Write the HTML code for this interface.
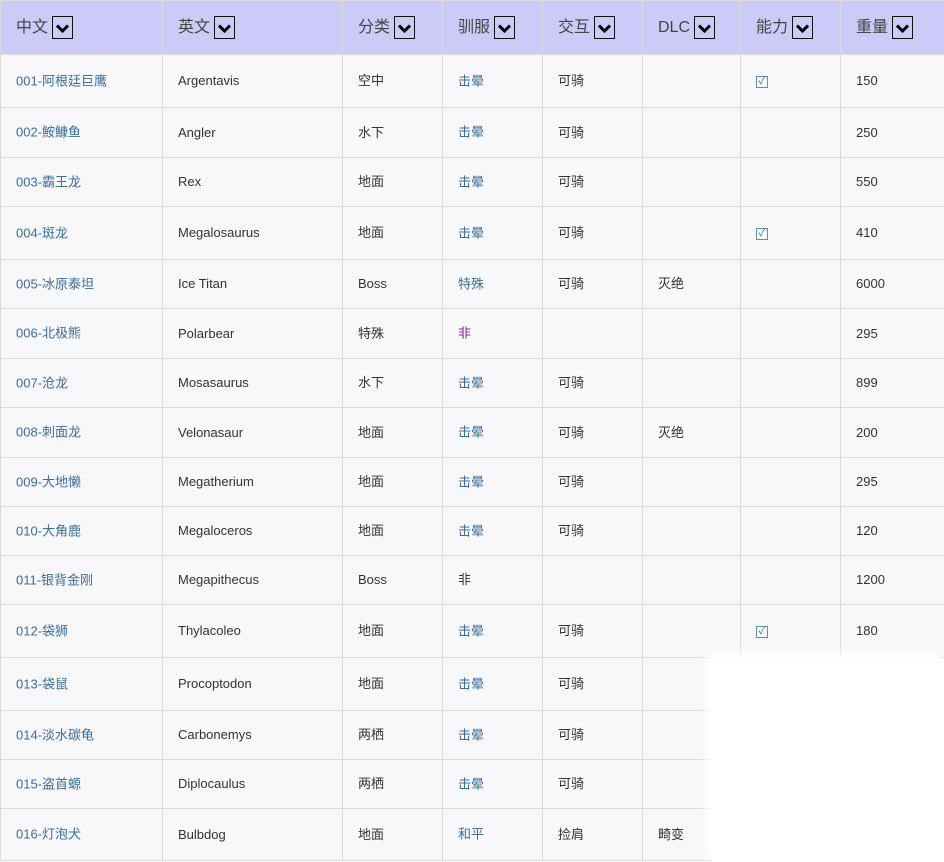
<!DOCTYPE html>
<html><head><meta charset="utf-8"><style>
body{margin:0;width:944px;height:862px;overflow:hidden;background:#fff;font-family:"Liberation Sans","Noto Sans CJK SC",sans-serif;}
table{border-collapse:collapse;table-layout:fixed;width:944px;position:absolute;left:0;top:0;}
td,th{border:1px solid #dcdadf;background:#f8f7f9;padding:0 0 0 15px;font-size:13px;line-height:20px;color:#333;text-align:left;font-weight:normal;white-space:nowrap;overflow:hidden;vertical-align:middle;}
td>*{vertical-align:middle}
th{background:#cccbf8;font-size:16px;line-height:24px;color:#444;height:53px;}
.dd{display:inline-block;width:19px;height:21px;border:1px solid #111;vertical-align:middle;margin-left:4px;position:relative;top:0px;}
.dd svg{position:absolute;left:3px;top:7px}
a{color:#3a6e9c;text-decoration:none}
.v{color:#7a2a8a}
.ck{display:inline-block;width:10px;height:10px;border:1px solid #5b8fb5;font-size:10px;line-height:10px;color:#3a6e9c;text-align:center}
.cover{position:absolute;left:712px;top:659px;width:232px;height:203px;background:#fff;box-shadow:-4px -4px 8px 2px #fff}
</style></head><body>
<table>
<colgroup><col style="width:162px"><col style="width:180px"><col style="width:100px"><col style="width:100px"><col style="width:100px"><col style="width:98px"><col style="width:100px"><col style="width:104px"></colgroup>
<tr>
<th>中文<span class="dd"><svg width="13" height="9"><path d="M1 1.5L6.5 7L12 1.5" stroke="#000" stroke-width="3" fill="none"/></svg></span></th>
<th>英文<span class="dd"><svg width="13" height="9"><path d="M1 1.5L6.5 7L12 1.5" stroke="#000" stroke-width="3" fill="none"/></svg></span></th>
<th>分类<span class="dd"><svg width="13" height="9"><path d="M1 1.5L6.5 7L12 1.5" stroke="#000" stroke-width="3" fill="none"/></svg></span></th>
<th>驯服<span class="dd"><svg width="13" height="9"><path d="M1 1.5L6.5 7L12 1.5" stroke="#000" stroke-width="3" fill="none"/></svg></span></th>
<th>交互<span class="dd"><svg width="13" height="9"><path d="M1 1.5L6.5 7L12 1.5" stroke="#000" stroke-width="3" fill="none"/></svg></span></th>
<th>DLC<span class="dd"><svg width="13" height="9"><path d="M1 1.5L6.5 7L12 1.5" stroke="#000" stroke-width="3" fill="none"/></svg></span></th>
<th>能力<span class="dd"><svg width="13" height="9"><path d="M1 1.5L6.5 7L12 1.5" stroke="#000" stroke-width="3" fill="none"/></svg></span></th>
<th>重量<span class="dd"><svg width="13" height="9"><path d="M1 1.5L6.5 7L12 1.5" stroke="#000" stroke-width="3" fill="none"/></svg></span></th>
</tr>
<tr style="height:53px"><td><a>001-阿根廷巨鹰</a></td><td>Argentavis</td><td>空中</td><td><a>击晕</a></td><td>可骑</td><td></td><td><span class="ck">✓</span></td><td>150</td></tr>
<tr style="height:50px"><td><a>002-鮟鱇鱼</a></td><td>Angler</td><td>水下</td><td><a>击晕</a></td><td>可骑</td><td></td><td></td><td>250</td></tr>
<tr style="height:49px"><td><a>003-霸王龙</a></td><td>Rex</td><td>地面</td><td><a>击晕</a></td><td>可骑</td><td></td><td></td><td>550</td></tr>
<tr style="height:53px"><td><a>004-斑龙</a></td><td>Megalosaurus</td><td>地面</td><td><a>击晕</a></td><td>可骑</td><td></td><td><span class="ck">✓</span></td><td>410</td></tr>
<tr style="height:49px"><td><a>005-冰原泰坦</a></td><td>Ice Titan</td><td>Boss</td><td><a>特殊</a></td><td>可骑</td><td>灭绝</td><td></td><td>6000</td></tr>
<tr style="height:50px"><td><a>006-北极熊</a></td><td>Polarbear</td><td>特殊</td><td><a class="v">非</a></td><td></td><td></td><td></td><td>295</td></tr>
<tr style="height:49px"><td><a>007-沧龙</a></td><td>Mosasaurus</td><td>水下</td><td><a>击晕</a></td><td>可骑</td><td></td><td></td><td>899</td></tr>
<tr style="height:50px"><td><a>008-刺面龙</a></td><td>Velonasaur</td><td>地面</td><td><a>击晕</a></td><td>可骑</td><td>灭绝</td><td></td><td>200</td></tr>
<tr style="height:49px"><td><a>009-大地懒</a></td><td>Megatherium</td><td>地面</td><td><a>击晕</a></td><td>可骑</td><td></td><td></td><td>295</td></tr>
<tr style="height:49px"><td><a>010-大角鹿</a></td><td>Megaloceros</td><td>地面</td><td><a>击晕</a></td><td>可骑</td><td></td><td></td><td>120</td></tr>
<tr style="height:49px"><td><a>011-银背金刚</a></td><td>Megapithecus</td><td>Boss</td><td>非</td><td></td><td></td><td></td><td>1200</td></tr>
<tr style="height:53px"><td><a>012-袋狮</a></td><td>Thylacoleo</td><td>地面</td><td><a>击晕</a></td><td>可骑</td><td></td><td><span class="ck">✓</span></td><td>180</td></tr>
<tr style="height:53px"><td><a>013-袋鼠</a></td><td>Procoptodon</td><td>地面</td><td><a>击晕</a></td><td>可骑</td><td></td><td></td><td></td></tr>
<tr style="height:49px"><td><a>014-淡水碳龟</a></td><td>Carbonemys</td><td>两栖</td><td><a>击晕</a></td><td>可骑</td><td></td><td></td><td></td></tr>
<tr style="height:49px"><td><a>015-盗首螈</a></td><td>Diplocaulus</td><td>两栖</td><td><a>击晕</a></td><td>可骑</td><td></td><td></td><td></td></tr>
<tr style="height:52px"><td><a>016-灯泡犬</a></td><td>Bulbdog</td><td>地面</td><td><a>和平</a></td><td>捡肩</td><td>畸变</td><td></td><td></td></tr>
</table>
<div class="cover"></div>
</body></html>
